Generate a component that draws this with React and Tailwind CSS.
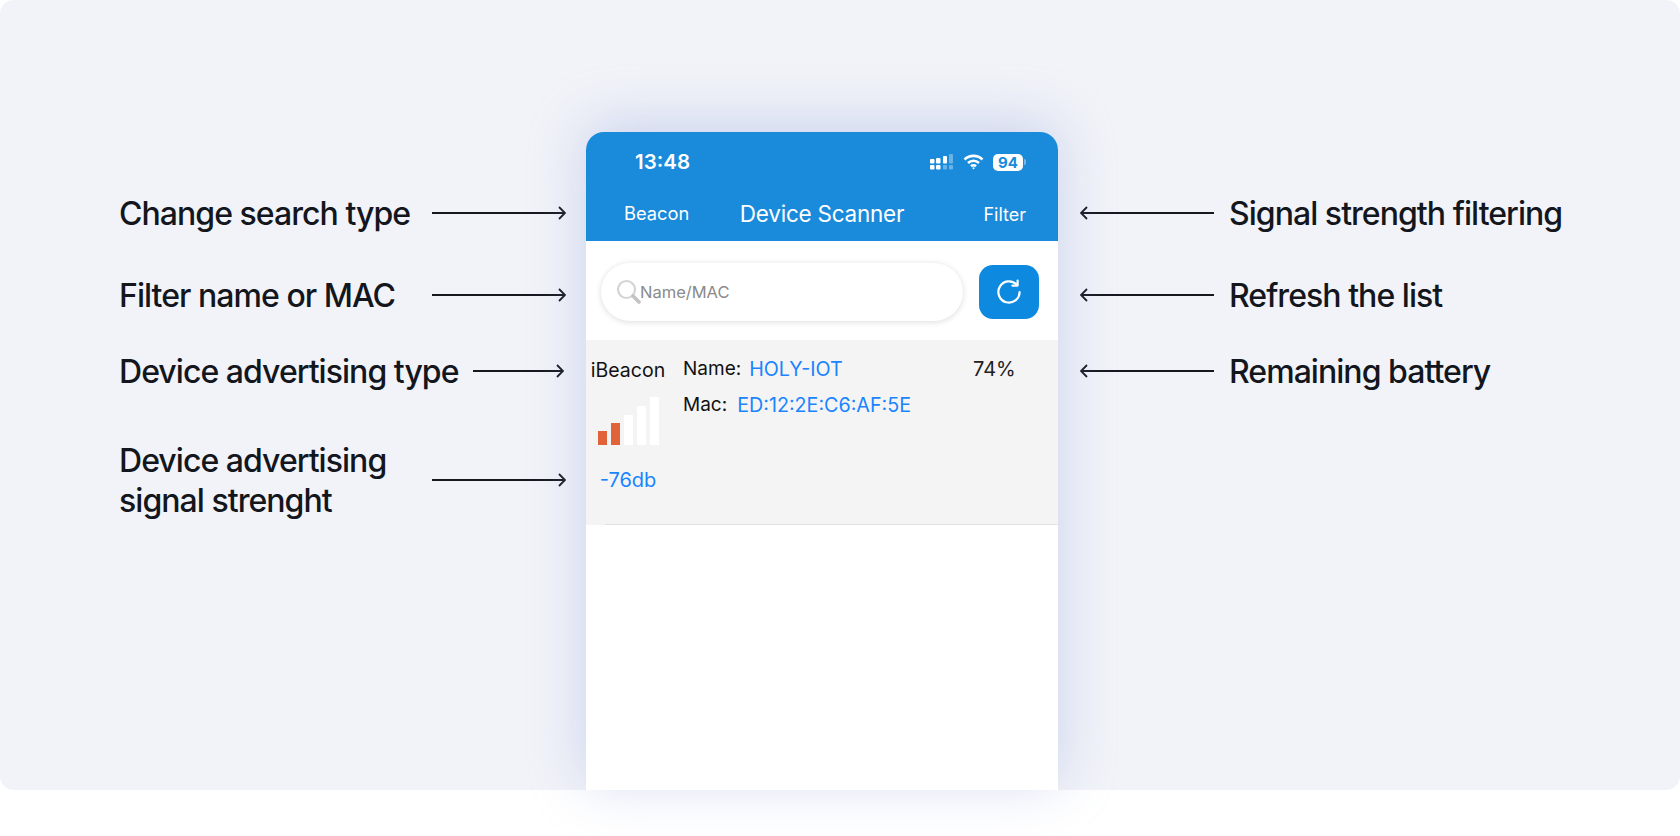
import React from 'react';

const ArrowRight = ({ width = 134 }) => (
  <svg width={width} height="14" viewBox={`0 0 ${width} 14`} fill="none" stroke="#15181f" strokeWidth="1.8" className="shrink-0">
    <path d={`M0 7H${width - 1}M${width - 7} 1l6 6-6 6`} />
  </svg>
);

const ArrowLeft = () => (
  <svg width="134" height="14" viewBox="0 0 134 14" fill="none" stroke="#15181f" strokeWidth="1.8" className="shrink-0">
    <path d="M134 7H1M7 1L1 7l6 6" />
  </svg>
);

const SignalCells = () => (
  <svg width="24" height="16" viewBox="0 0 24 16" fill="white">
    <rect x="0" y="5" width="4.5" height="4.5" rx="1" />
    <rect x="0" y="11" width="4.5" height="4.5" rx="1" />
    <rect x="6" y="4" width="4.5" height="5.5" rx="1" />
    <rect x="6" y="11" width="4.5" height="4.5" rx="1" />
    <rect x="13" y="2" width="4" height="7.5" rx="1" />
    <rect x="13" y="11" width="4" height="4.5" rx="1" opacity=".35" />
    <rect x="19" y="0" width="4" height="9.5" rx="1" opacity=".35" />
    <rect x="19" y="11" width="4" height="4.5" rx="1" opacity=".35" />
  </svg>
);

const Wifi = () => (
  <svg width="21" height="16" viewBox="0 0 21 16" fill="none" stroke="white" strokeWidth="2.6">
    <path d="M1.5 5.5a13 13 0 0 1 18 0" />
    <path d="M5 9a8 8 0 0 1 11 0" />
    <path d="M8 12.3a3.6 3.6 0 0 1 5 0" />
    <circle cx="10.5" cy="14.3" r="1" fill="white" stroke="none" />
  </svg>
);

const Battery = () => (
  <div className="flex items-center gap-[1px]">
    <div className="w-[30px] h-[17px] rounded-[5px] bg-white flex items-center justify-center text-[#1a8adb] text-[15px] leading-none font-bold">94</div>
    <div className="w-[2px] h-[6px] rounded-r-sm bg-white/40" />
  </div>
);

const SearchIcon = () => (
  <svg width="26" height="26" viewBox="0 0 26 26" fill="none" className="shrink-0">
    <circle cx="10.5" cy="10.5" r="8.5" stroke="#d4d4d4" strokeWidth="2.2" />
    <path d="M17 17l6 6" stroke="#c4c4c4" strokeWidth="3.8" strokeLinecap="round" />
  </svg>
);

const RefreshIcon = () => (
  <svg width="26" height="26" viewBox="0 0 26 26" fill="none" stroke="white" strokeWidth="2.2" strokeLinecap="round" strokeLinejoin="round">
    <path d="M20.6 5.6A10.6 10.6 0 1 0 23.6 13" />
    <path d="M21.6 1.6v5h-5.2" />
  </svg>
);

const bars = [
  { height: 'h-[14px]', color: 'bg-[#e0633a]' },
  { height: 'h-[22px]', color: 'bg-[#e0633a]' },
  { height: 'h-[30px]', color: 'bg-white' },
  { height: 'h-[39px]', color: 'bg-white' },
  { height: 'h-[48px]', color: 'bg-white' },
];

const Label = ({ children, className = '' }) => (
  <div className={`pt-[2px] text-[32px] leading-[40px] font-medium tracking-[-0.03em] text-[#13161c] ${className}`}>{children}</div>
);

const App = () => {
  return (
    <div className="w-full h-[836px] bg-white overflow-hidden font-['Inter',sans-serif]">
      <div className="h-[790px] rounded-[14px] bg-[#f1f3f8] flex">
        {/* left annotations */}
        <div className="w-[586px] shrink-0 pl-[119px] pr-[20px] pt-[193px]">
          <div className="flex items-center justify-between h-10">
            <Label>Change search type</Label>
            <ArrowRight />
          </div>
          <div className="flex items-center justify-between h-10 mt-[42px]">
            <Label>Filter name or MAC</Label>
            <ArrowRight />
          </div>
          <div className="flex items-center justify-between h-10 mt-[36px] pr-[2px]">
            <Label>Device advertising type</Label>
            <ArrowRight width={91} />
          </div>
          <div className="flex items-center justify-between h-20 mt-[49px]">
            <Label>Device advertising<br />signal strenght</Label>
            <ArrowRight />
          </div>
        </div>

        {/* phone */}
        <div className="w-[472px] shrink-0 mt-[132px] h-[658px] bg-white rounded-t-[18px] shadow-[0_-8px_55px_rgba(150,165,225,0.42)] relative">
          <div className="h-[109px] bg-[#1a8adb] rounded-t-[18px] text-white">
            <div className="h-[60px] flex items-center pl-[49px] pr-[32px] justify-between">
              <span className="text-[20.5px] font-semibold">13:48</span>
              <div className="flex items-center gap-[9px]">
                <SignalCells />
                <Wifi />
                <Battery />
              </div>
            </div>
            <div className="flex items-center pl-[38px] pr-[32px] h-[44px]">
              <span className="flex-1 text-[18.3px]">Beacon</span>
              <span className="text-[22.5px] tracking-[-0.01em] -ml-[6px]">Device Scanner</span>
              <span className="flex-1 text-right text-[18px]">Filter</span>
            </div>
          </div>

          <div className="h-[99px] flex items-center pt-[2px] pl-[15px] pr-[19px] gap-[16px]">
            <div className="w-[362px] h-[58px] rounded-full bg-white shadow-[0_1px_6px_rgba(0,0,0,0.14)] flex items-center pl-[15px]">
              <SearchIcon />
              <span className="text-[16.5px] text-[#8a8a8a] -ml-[2px] pt-[1px]">Name/MAC</span>
            </div>
            <button className="w-[60px] h-[54px] rounded-[14px] bg-[#0d8ae0] flex items-center justify-center">
              <RefreshIcon />
            </button>
          </div>

          <div className="h-[185px] bg-[#f4f4f4] flex relative">
            <div className="w-[84px] shrink-0 flex flex-col items-center text-[19.5px] pt-[17px]">
              <span className="text-[#111] leading-[26px]">iBeacon</span>
              <div className="flex items-end gap-[4px] h-[48px] mt-[14px]">
                {bars.map((bar, i) => (
                  <div key={i} className={`w-[9px] ${bar.height} ${bar.color}`} />
                ))}
              </div>
              <span className="text-[#1a84ff] text-[20px] leading-[26px] mt-[22px]">-76db</span>
            </div>
            <div className="pl-[13px] pt-[16px] text-[19px] leading-[26px] text-[#111] flex-1">
              <div className="flex gap-[8px]">
                <span>Name:</span>
                <span className="text-[#1a84ff] text-[19.7px]">HOLY-IOT</span>
              </div>
              <div className="flex gap-[10px] mt-[10px]">
                <span>Mac:</span>
                <span className="text-[#1a84ff] text-[19.7px]">ED:12:2E:C6:AF:5E</span>
              </div>
            </div>
            <div className="w-[85px] shrink-0 pt-[16px] text-[20px] leading-[26px] text-[#222]">74%</div>
            <div className="absolute left-[19px] right-0 bottom-0 h-[1px] bg-[#e2e2e2]" />
          </div>
        </div>

        {/* right annotations */}
        <div className="flex-1 pl-[22px] pt-[193px]">
          <div className="flex items-center gap-[15px] h-10">
            <ArrowLeft />
            <Label>Signal strength filtering</Label>
          </div>
          <div className="flex items-center gap-[15px] h-10 mt-[42px]">
            <ArrowLeft />
            <Label>Refresh the list</Label>
          </div>
          <div className="flex items-center gap-[15px] h-10 mt-[36px]">
            <ArrowLeft />
            <Label>Remaining battery</Label>
          </div>
        </div>
      </div>
    </div>
  );
};

export default App;
